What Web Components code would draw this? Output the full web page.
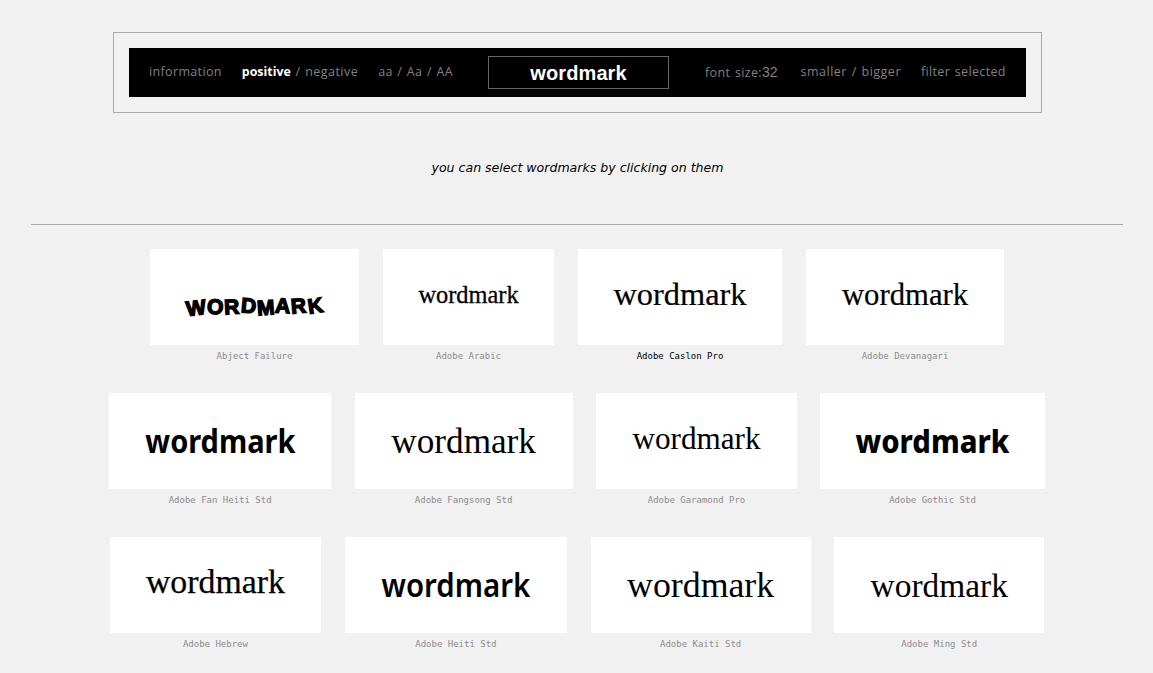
<!doctype html>
<html><head><meta charset="utf-8"><style>
html,body{margin:0;padding:0;background:#f1f1f1}
body{width:1153px;height:673px;overflow:hidden;font-family:"DejaVu Sans",sans-serif}
</style></head><body>
<template id="tb"><style>
:host{display:block;box-sizing:border-box;width:929px;height:81px;margin:32px 0 0 113px;border:1px solid #aaa;padding:15px}
.bar{display:flex;align-items:center;height:49px;background:#000;padding-left:20px;color:#808080;font:12.5px/16px "Open Sans",sans-serif;letter-spacing:.35px;word-spacing:1px;white-space:nowrap}
.i{margin-right:20px;padding-bottom:1px}
b{color:#fff;font-weight:700;font-size:12.4px;letter-spacing:0}
.neg{letter-spacing:.45px;word-spacing:1px}
.box{box-sizing:border-box;width:181px;height:33px;border:1px solid #666;margin:0 36px 0 15px;color:#fff;font:bold 20px/33px "Liberation Sans",sans-serif;text-align:center;letter-spacing:.1px;word-spacing:0}
.n{font-family:"Liberation Sans",sans-serif;font-size:14px;letter-spacing:0}
</style><div class="bar"><span class="i">information</span><span class="i"><b>positive</b><span class="neg"> / negative</span></span><span class="i">aa / Aa / AA</span><span class="box">wordmark</span><span class="i" style="margin-right:23px">font size:<span class="n">32</span></span><span class="i" style="letter-spacing:.5px">smaller / bigger</span><span class="i">filter selected</span></div></template>
<template id="nt"><style>
:host{display:block;text-align:center;margin:47px 0 0;padding-left:2px;font:italic 12.55px/16px "DejaVu Sans",sans-serif;color:#000}
</style><slot></slot></template>
<template id="ru"><style>
:host{display:block;height:1px;margin:48px 30px 0 31px;background:#aaa}
</style></template>
<template id="ro"><style>
:host{display:flex;justify-content:center;margin:0 30px 0 31px;height:144px}
</style><slot></slot></template>
<template id="ca"><style>
:host{display:block;flex:none}
.w{height:96px;background:#fff;display:flex;justify-content:center;align-items:flex-start;color:#000;white-space:nowrap;line-height:40px}
.l{margin-top:6px;font:9px/11px "DejaVu Sans Mono",monospace;color:#8c8c8c;text-align:center}
:host([sel]) .l{color:#000}
</style><div class="w" part="w"><slot></slot></div><div class="l"></div></template>
<template id="gr"><style>
:host{display:block;margin-top:24px}
</style><slot></slot></template>
<template id="ab"><style>
:host{display:inline-flex;margin-top:38px;font:bold 21px/40px "Liberation Sans",sans-serif;-webkit-text-stroke:1.4px #000;color:#000;letter-spacing:0}
span{display:inline-block;margin-right:1px}
</style><span style="transform:rotate(-7deg) translateY(1px)">W</span><span style="transform:rotate(5deg)">O</span><span style="transform:rotate(-3deg)">R</span><span style="transform:rotate(5deg) translateY(-1px)">D</span><span style="transform:rotate(-4deg) translateY(1px)">M</span><span style="transform:rotate(3deg) translateY(-1px)">A</span><span style="transform:rotate(-5deg) translateY(-1px)">R</span><span style="transform:rotate(-9deg) translateY(-1px);margin-right:0">K</span></template>

<word-toolbar></word-toolbar>
<word-note>you can select wordmarks by clicking on them</word-note>
<word-rule></word-rule>
<word-grid>
<word-row style="gap:24px">
 <word-card name="Abject Failure" style="width:209px"><word-scrawl></word-scrawl></word-card>
 <word-card name="Adobe Arabic" style="width:171px"><span style="margin-top:26px;font:24.4px/40px 'Liberation Serif',serif;-webkit-text-stroke:.3px #000">wordmark</span></word-card>
 <word-card name="Adobe Caslon Pro" sel style="width:204px"><span style="margin-top:25px;font:32.4px/40px 'Liberation Serif',serif;-webkit-text-stroke:.2px #000">wordmark</span></word-card>
 <word-card name="Adobe Devanagari" style="width:198px"><span style="margin-top:26px;font:30.7px/40px 'Liberation Serif',serif;-webkit-text-stroke:.2px #000">wordmark</span></word-card>
</word-row>
<word-row style="gap:23.5px">
 <word-card name="Adobe Fan Heiti Std" style="width:221.75px"><span style="display:inline-block;margin-top:28px;font:700 32.2px/40px 'Noto Sans',sans-serif;transform:scaleX(.9)">wordmark</span></word-card>
 <word-card name="Adobe Fangsong Std" style="width:218.25px"><span style="margin-top:29px;font:35.2px/40px 'Liberation Serif',serif">wordmark</span></word-card>
 <word-card name="Adobe Garamond Pro" style="width:200.5px"><span style="margin-top:26px;font:31.2px/40px 'Liberation Serif',serif">wordmark</span></word-card>
 <word-card name="Adobe Gothic Std" style="width:224.5px"><span style="display:inline-block;margin-top:27px;font:800 32.4px/40px 'Noto Sans',sans-serif;transform:scaleX(.9)">wordmark</span></word-card>
</word-row>
<word-row style="gap:23.7px">
 <word-card name="Adobe Hebrew" style="width:211.3px"><span style="margin-top:25px;font:33.8px/40px 'Liberation Serif',serif;-webkit-text-stroke:.25px #000">wordmark</span></word-card>
 <word-card name="Adobe Heiti Std" style="width:222.3px"><span style="display:inline-block;margin-top:28px;font:600 32px/40px 'Noto Sans',sans-serif;transform:scaleX(.92)">wordmark</span></word-card>
 <word-card name="Adobe Kaiti Std" style="width:219.8px"><span style="margin-top:28px;font:35.8px/40px 'Liberation Serif',serif">wordmark</span></word-card>
 <word-card name="Adobe Ming Std" style="width:210px"><span style="margin-top:29px;font:33.4px/40px 'Liberation Serif',serif">wordmark</span></word-card>
</word-row>
</word-grid>
<script>
function def(tag,id,init){customElements.define(tag,class extends HTMLElement{constructor(){super();const r=this.attachShadow({mode:"open"});r.appendChild(document.getElementById(id).content.cloneNode(true));}connectedCallback(){if(init)init(this)}})}
def("word-toolbar","tb");def("word-note","nt");def("word-rule","ru");def("word-row","ro");def("word-grid","gr");def("word-scrawl","ab");
def("word-card","ca",e=>{e.shadowRoot.querySelector(".l").textContent=e.getAttribute("name")});
</script>
</body></html>
